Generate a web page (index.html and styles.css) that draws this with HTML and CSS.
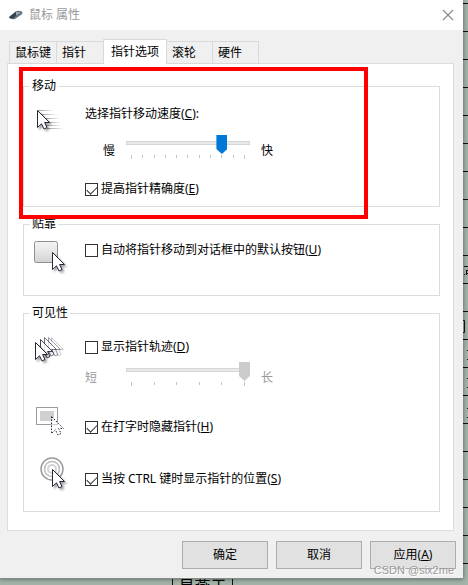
FILE: index.html
```html
<!DOCTYPE html>
<html lang="zh-CN">
<head>
    <meta charset="UTF-8">
    <meta name="viewport" content="width=device-width, initial-scale=1.0">
    <title>鼠标 属性</title>
    <link rel="stylesheet" href="styles.css">
</head>
<body>
    <!-- shared arrow cursor -->
    <svg class="defs" width="0" height="0" aria-hidden="true">
        <defs>
            <filter id="soft" x="-30%" y="-30%" width="180%" height="180%">
                <feDropShadow dx="2" dy="2" stdDeviation="1" flood-color="#000" flood-opacity="0.35"/>
            </filter>
            <path id="arrow" d="M.5 .5V17.5L4.5 13.8L7 19L10 17.5L7.600 12.500H12.500Z"/>
        </defs>
    </svg>

    <div class="window">
        <header class="titlebar">
            <svg class="app-icon" width="16" height="12" viewBox="0 0 16 12">
                <path d="M1 8.500L8 2.500Q10 1 14 2.500Q15.500 4 13.500 5.500L7 10Q3 11 1 8.500Z" fill="#66727f"/>
                <path d="M1 8L8 2.500L10 5L5 9.500Q2 10 1 8Z" fill="#35424d"/>
                <path d="M8 3L13 3.500L8 6.500Z" fill="#9aabb9"/>
            </svg>
            <h1>鼠标 属性</h1>
            <button class="close" type="button" aria-label="关闭">
                <svg width="12" height="12" viewBox="0 0 12 12"><path d="M1 1L11 11M11 1L1 11" stroke="#8c8c8c" stroke-width="1.200"/></svg>
            </button>
        </header>

        <nav class="tabs">
            <button type="button">鼠标键</button>
            <button type="button">指针</button>
            <button type="button" class="active">指针选项</button>
            <button type="button">滚轮</button>
            <button type="button">硬件</button>
        </nav>

        <main class="panel">
            <fieldset class="group move">
                <legend>移动</legend>
                <div class="row">
                    <svg class="icon" width="36" height="36" viewBox="0 0 36 36">
                        <defs>
                            <linearGradient id="fade"><stop offset="0" stop-color="#999"/><stop offset="1" stop-color="#999" stop-opacity="0"/></linearGradient>
                        </defs>
                        <g fill="url(#fade)">
                            <rect x="4" y="8" width="16" height="1"/><rect x="7" y="12" width="16" height="1"/>
                            <rect x="11" y="16" width="15" height="1"/><rect x="13" y="20" width="14" height="1"/>
                            <rect x="12" y="23" width="15" height="1"/><rect x="13" y="26" width="17" height="1"/>
                        </g>
                        <use href="#arrow" x="3" y="8" fill="#fff" stroke="#25253a" filter="url(#soft)"/>
                    </svg>
                    <div class="content">
                        <label class="caption" for="speed">选择指针移动速度(<u>C</u>):</label>
                        <div class="slider">
                            <span class="low indent">慢</span>
                            <div class="scale">
                                <input type="range" id="speed" min="0" max="10" value="8">
                                <div class="ticks"><i></i><i></i><i></i><i></i><i></i><i></i><i></i><i></i><i></i><i></i><i></i></div>
                            </div>
                            <span class="high">快</span>
                        </div>
                        <label class="check"><input type="checkbox" checked>提高指针精确度(<u>E</u>)</label>
                    </div>
                </div>
            </fieldset>

            <fieldset class="group snap">
                <legend>贴靠</legend>
                <div class="row">
                    <svg class="icon" width="36" height="36" viewBox="0 0 36 36">
                        <defs>
                            <linearGradient id="key" x2="0" y2="1"><stop offset="0" stop-color="#f4f4f4"/><stop offset=".5" stop-color="#e6e6e6"/><stop offset="1" stop-color="#d2d2d2"/></linearGradient>
                        </defs>
                        <rect x=".5" y="1.500" width="23" height="21" rx="2" fill="url(#key)" stroke="#8e8f91"/>
                        <use href="#arrow" x="18" y="12" fill="#fff" stroke="#25253a" filter="url(#soft)"/>
                    </svg>
                    <div class="content">
                        <label class="check"><input type="checkbox">自动将指针移动到对话框中的默认按钮(<u>U</u>)</label>
                    </div>
                </div>
            </fieldset>

            <fieldset class="group visibility">
                <legend>可见性</legend>
                <div class="row">
                    <svg class="icon" width="36" height="36" viewBox="0 0 36 36">
                        <g fill="#fff" stroke="#25253a">
                            <use href="#arrow" x="17" y="3" opacity=".25"/>
                            <use href="#arrow" x="14" y="3" opacity=".45"/>
                            <use href="#arrow" x="10" y="3" opacity=".65"/>
                            <use href="#arrow" x="6" y="5" opacity=".85"/>
                            <use href="#arrow" x="1" y="8" filter="url(#soft)"/>
                        </g>
                    </svg>
                    <div class="content">
                        <label class="check"><input type="checkbox">显示指针轨迹(<u>D</u>)</label>
                        <div class="slider disabled">
                            <span class="low">短</span>
                            <div class="scale">
                                <input type="range" min="0" max="5" value="5" aria-label="轨迹长度" disabled>
                                <div class="ticks"><i></i><i></i><i></i><i></i><i></i><i></i></div>
                            </div>
                            <span class="high">长</span>
                        </div>
                    </div>
                </div>
                <div class="row typing">
                    <svg class="icon" width="36" height="36" viewBox="0 0 36 36">
                        <rect x="2.500" y="3.500" width="21" height="17" fill="#fff" stroke="#9b9b9f"/>
                        <rect x="6" y="7" width="14" height="10" fill="#d0d0d3"/>
                        <use href="#arrow" x="17" y="12" fill="#fff" fill-opacity=".5" stroke="#25253a" stroke-dasharray="1.500 1.500"/>
                    </svg>
                    <div class="content">
                        <label class="check"><input type="checkbox" checked>在打字时隐藏指针(<u>H</u>)</label>
                    </div>
                </div>
                <div class="row locate">
                    <svg class="icon" width="36" height="36" viewBox="0 0 36 36">
                        <g fill="none">
                            <circle cx="18" cy="13" r="11" stroke="#9b9b9f" stroke-width="1.500"/>
                            <circle cx="18" cy="13" r="7.500" stroke="#bcbcc0" stroke-width="1.500"/>
                            <circle cx="18" cy="13" r="4" stroke="#d4d4d8" stroke-width="2"/>
                        </g>
                        <use href="#arrow" x="18" y="13" fill="#fff" stroke="#25253a" filter="url(#soft)"/>
                    </svg>
                    <div class="content">
                        <label class="check"><input type="checkbox" checked>当按 CTRL 键时显示指针的位置(<u>S</u>)</label>
                    </div>
                </div>
            </fieldset>
            <div class="highlight"></div>
        </main>

        <footer class="actions">
            <button type="button">确定</button>
            <button type="button">取消</button>
            <button type="button">应用(<u>A</u>)</button>
            <span class="watermark">CSDN @six2me</span>
        </footer>
    </div>

    <div class="behind">
        <span class="cell">易燕于</span>
    </div>
    <!-- edges of the sheet peeking out on the right -->
    <svg class="sheet-edge" width="5" height="160" viewBox="0 0 5 160" fill="none" stroke="#111" aria-hidden="true">
        <path d="M1 .5H5M3 4.500H5M3.500 4V9M1 8.500H2M3 7.500H5M0 54.500H1.500V66.500H0M4 84.500H5M4 93.500H5M4 112.500H5M4 121.500H5M4 142.500H5M4 151.500H5"/>
    </svg>
</body>
</html>
```
FILE: styles.css
```css
* {
    box-sizing: border-box;
}
body {
    margin: 0;
    padding-right: 5px;
    min-height: 100vh;
    overflow: hidden;
    position: relative;
    font-family: "Noto Sans", "Noto Sans CJK SC", sans-serif;
    font-size: 12px;
    line-height: 20px;
    color: #000;
    background: linear-gradient(#a3b3a9, #a3b3a9) left bottom / 100% 5px no-repeat,
        repeating-linear-gradient(180deg, #a3b3a9 0, #a3b3a9 3px, #111 3px, #111 4px, #a3b3a9 4px, #a3b3a9 28px);
}
.defs {
    position: absolute;
}
.window {
    background: #f0f0f0;
    border-bottom: 1px solid #858c88;
    box-shadow: 0 0 4px rgba(0, 0, 0, 0.5);
    position: relative;
}
button {
    font: inherit;
    color: inherit;
    cursor: pointer;
}

/* title bar */
.titlebar {
    display: flex;
    align-items: center;
    height: 30px;
    padding: 0 9px 0 8px;
    background: #fff;
}
.titlebar h1 {
    flex: 1;
    margin: 0 0 0 5px;
    font-size: 12px;
    font-weight: normal;
    color: #999;
}
.close {
    display: flex;
    padding: 0;
    border: none;
    background: none;
}

/* tabs */
.tabs {
    display: flex;
    align-items: flex-end;
    height: 34px;
    margin: 0 9px -1px;
    position: relative;
    z-index: 1;
}
.tabs button {
    width: 47px;
    height: 23px;
    padding: 0 5px;
    border: 1px solid #d9d9d9;
    border-left: none;
    background: #f0f0f0;
    text-align: left;
    white-space: nowrap;
    line-height: 20px;
}
.tabs button:first-child {
    width: 48px;
    border-left: 1px solid #d9d9d9;
}
.tabs .active {
    width: 64px;
    height: 25px;
    margin-left: -1px;
    padding: 0 7px;
    border-left: 1px solid #d9d9d9;
    border-bottom: none;
    background: #fff;
}
.tabs .active ~ button {
    width: 46px;
}

/* panel and groups */
.panel {
    position: relative;
    margin: 0 9px 0 7px;
    padding: 14px 13px 18px 15px;
    border: 1px solid #dcdcdc;
    background: #fff;
}
.group {
    margin: 0 0 9px;
    padding: 0 6px;
    min-width: 0;
    border: 1px solid #dcdcdc;
}
.group legend {
    padding: 0 2px;
    line-height: 16px;
}
.row {
    display: grid;
    grid-template-columns: 55px 1fr;
}
.icon {
    display: block;
    margin-left: 4px;
}
.content {
    display: flex;
    flex-direction: column;
    align-items: flex-start;
}
.move .row {
    padding: 10px 0 7px;
}
.move .slider {
    margin: 11px 0 20px;
}
.snap .row {
    padding: 8px 0 19px;
}
.visibility {
    margin-bottom: 0;
    padding-bottom: 19px;
}
.visibility .row:first-of-type {
    padding-top: 13px;
}
.visibility .check {
    margin-top: 3px;
}
.visibility .slider {
    margin-top: 5px;
}
.visibility .typing {
    margin: 18px 0 16px;
}
.visibility .typing .check,
.visibility .locate .check {
    margin-top: 13px;
}
.move .icon {
    margin-top: -2px;
}

/* tick boxes */
.check {
    display: flex;
    align-items: center;
    white-space: pre;
}
.check input {
    appearance: none;
    width: 13px;
    height: 13px;
    margin: 0 3px 0 0;
    border: 1px solid #333;
    background: #fff;
}
.check input:checked::before {
    content: "";
    display: block;
    width: 9px;
    height: 5px;
    margin: 2px 1px;
    border: solid #333;
    border-width: 0 0 1px 1px;
    transform: rotate(-45deg);
}

/* sliders */
.slider {
    display: flex;
    align-items: flex-end;
    height: 24px;
    line-height: 16px;
}
.low {
    width: 41px;
}
.indent {
    padding-left: 18px;
}
.high {
    margin-left: 11px;
}
.scale {
    width: 124px;
    height: 24px;
}
.scale input {
    appearance: none;
    display: block;
    width: 100%;
    height: 19px;
    margin: 0;
    background: linear-gradient(#d6d6d6, #d6d6d6) 0 6px / 100% 4px no-repeat;
}
.scale input::-webkit-slider-runnable-track {
    height: 19px;
    background: linear-gradient(#e7eaea, #e7eaea) 1px 7px / 122px 2px no-repeat;
}
.scale input::-webkit-slider-thumb {
    appearance: none;
    width: 11px;
    height: 19px;
    background: #0078d7;
    clip-path: polygon(0 0, 100% 0, 100% 14px, 50% 100%, 0 14px);
}
.ticks {
    display: flex;
    justify-content: space-between;
    padding: 1px 5px 0;
}
.ticks i {
    width: 1px;
    height: 3px;
    background: #c4c4c4;
}
.ticks i:first-child,
.ticks i:last-child {
    height: 4px;
}
.scale .ticks {
    margin: 0;
}
.disabled {
    color: #999;
}
.disabled input::-webkit-slider-thumb {
    background: #ccc;
}

/* red frame drawn over the first group */
.highlight {
    position: absolute;
    top: 3px;
    left: 11px;
    right: 85px;
    height: 152px;
    border: 4px solid #f00;
    pointer-events: none;
}

/* bottom buttons */
.actions {
    display: flex;
    justify-content: flex-end;
    gap: 8px;
    padding: 10px 7px 9px;
    position: relative;
}
.actions button {
    width: 86px;
    height: 28px;
    padding: 0;
    border: 1px solid #adadad;
    background: #e1e1e1;
}
.watermark {
    position: absolute;
    right: 9px;
    bottom: 0;
    font-family: "Liberation Sans", Arial, sans-serif;
    font-size: 11px;
    line-height: 16px;
    color: #999;
    text-shadow: 1px 1px 0 #fff;
}

/* spreadsheet showing below the window */
.behind {
    height: 6px;
    padding-left: 172px;
    overflow: hidden;
}
.cell {
    display: block;
    width: 61px;
    border: solid #111;
    border-width: 0 1px;
    text-align: center;
    font-size: 16px;
    line-height: 14px;
}
.sheet-edge {
    position: absolute;
    top: 266px;
    right: 0;
}
```
